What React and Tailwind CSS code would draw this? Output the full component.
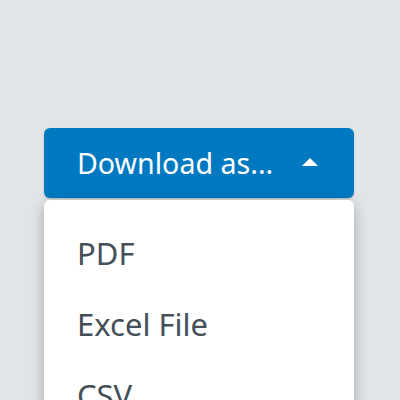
import React, { useState } from "react";

const items = ["PDF", "Excel File", "CSV"];

const App = () => {
  const [open, setOpen] = useState(true);

  return (
    <div
      className="w-[400px] h-[400px] overflow-hidden bg-[#e2e5e7] pt-[128px] px-[44px]"
      style={{ fontFamily: "'Noto Sans', sans-serif" }}
    >
      <div className="w-[310px]">
        <button
          onClick={() => setOpen(!open)}
          className="w-full h-[70px] flex items-center justify-between pl-[33px] pr-[36px] bg-[#0079c1] text-white rounded-[6px] shadow-[0_1px_2px_rgba(0,0,0,0.2)]"
        >
          <span className="text-[28.6px] leading-none">Download as...</span>
          <svg width="16" height="8" viewBox="0 0 16 8" className="mt-[-2px]">
            <polygon points="0,8 8,0 16,8" fill="#ffffff" />
          </svg>
        </button>
        {open && (
          <div className="mt-[2px] bg-white rounded-[6px] shadow-[0_4px_14px_rgba(0,0,0,0.28)] pt-[18px] pb-[18px]">
            {items.map((item) => (
              <div
                key={item}
                className="h-[71px] flex items-center pl-[33px] text-[31px] text-[#454f57]"
              >
                {item}
              </div>
            ))}
          </div>
        )}
      </div>
    </div>
  );
};

export default App;
